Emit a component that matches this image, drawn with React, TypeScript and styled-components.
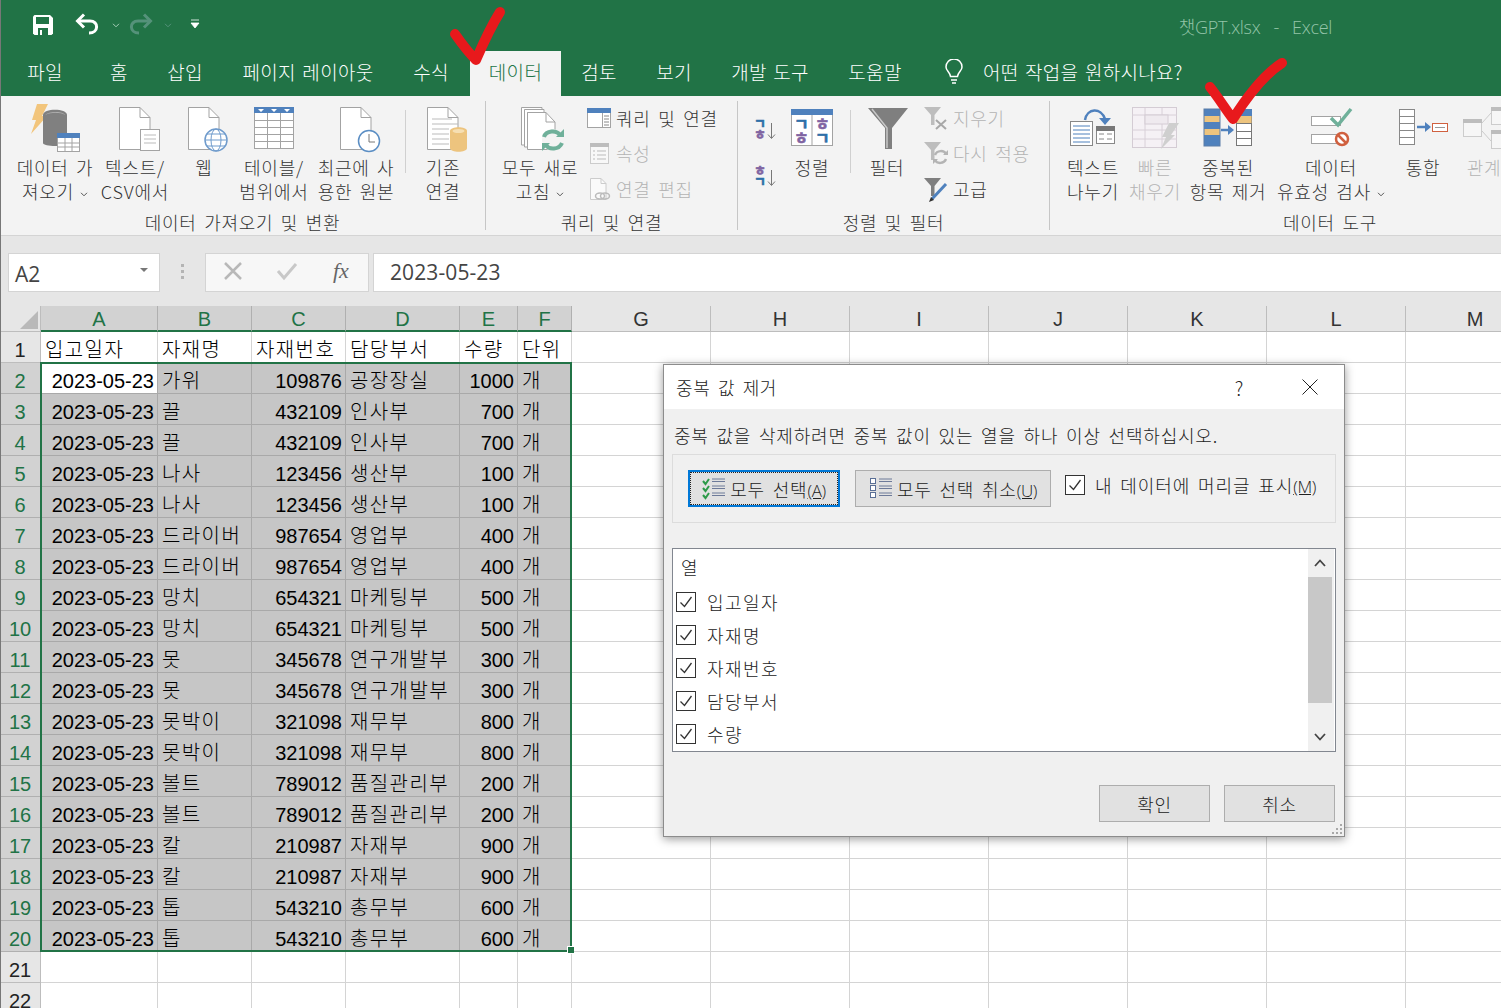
import React from 'react';
import styled, { createGlobalStyle } from 'styled-components';

const KO = `'Noto Sans CJK KR', 'Noto Sans', sans-serif`;
const LATIN = `'Liberation Sans', 'Noto Sans CJK KR', sans-serif`;
const GREEN = '#217346';

const GlobalStyle = createGlobalStyle`
  html, body { margin: 0; padding: 0; background: #fff; }
  body { font-family: ${KO}; color: #262626; }
`;

const Root = styled.div`
  position: relative;
  width: 1501px;
  height: 1008px;
  overflow: hidden;
  &::after {
    content: '';
    position: absolute;
    left: 0;
    top: 0;
    bottom: 0;
    width: 1px;
    background: #777;
  }
`;

/* ---------- title bar and tabs ---------- */
const TitleBar = styled.div`
  height: 51px;
  background: ${GREEN};
  display: flex;
  align-items: center;
  padding-left: 33px;
  position: relative;
`;
const Qat = styled.div<{ $ml?: number }>`
  display: flex;
  margin-left: ${(p) => p.$ml || 0}px;
`;
const FileName = styled.div`
  margin-left: auto;
  margin-right: 169px;
  font-size: 18px;
  color: #93c4a8;
  white-space: pre;
  font-family: 'Open Sans', ${KO};
  font-weight: 300;
  letter-spacing: -0.3px;
`;
const TabRow = styled.div`
  height: 45px;
  background: ${GREEN};
  display: flex;
  padding-left: 4px;
`;
const Tab = styled.div<{ $w: number; $active?: boolean }>`
  width: ${(p) => p.$w}px;
  margin-left: ${(p) => (p.$active ? 6 : 0)}px;
  background: ${(p) => (p.$active ? '#f3f3f3' : 'transparent')};
  color: ${(p) => (p.$active ? GREEN : '#fff')};
  font-size: 19px;
  letter-spacing: 0.3px;
  word-spacing: 2px;
  display: flex;
  align-items: center;
  justify-content: center;
  white-space: nowrap;
  font-weight: 300;
  padding-bottom: 4px;
  box-sizing: border-box;
`;
const TellMe = styled.div`
  margin-left: 23px;
  display: flex;
  align-items: center;
  gap: 19px;
  color: #fff;
  font-size: 19px;
  font-weight: 300;
  letter-spacing: 0.3px;
  word-spacing: 2px;
  padding-bottom: 4px;
`;

/* ---------- ribbon ---------- */
const Ribbon = styled.div`
  height: 140px;
  box-sizing: border-box;
  background: #f3f3f3;
  border-bottom: 1px solid #d4d4d4;
  display: flex;
  overflow: hidden;
  padding-top: 5px;
`;
const Group = styled.div<{ $w: number; $pl: number; $end?: boolean }>`
  flex: none;
  width: ${(p) => p.$w}px;
  height: 129px;
  box-sizing: border-box;
  border-right: ${(p) => (p.$end ? 'none' : '1px solid #c6c6c6')};
  display: flex;
  flex-direction: column;
  .items {
    flex: 1;
    display: flex;
    padding-left: ${(p) => p.$pl}px;
  }
`;
const GroupLabel = styled.div`
  height: 18px;
  line-height: 20px;
  text-align: center;
  font-size: 18px;
  font-weight: 300;
  letter-spacing: 0.7px;
  word-spacing: 3px;
  color: #333;
`;
const Item = styled.div<{ $w: number; $off?: boolean }>`
  flex: none;
  width: ${(p) => p.$w}px;
  display: flex;
  flex-direction: column;
  align-items: center;
  color: ${(p) => (p.$off ? '#b4b4b4' : '#333')};
  svg.big { display: block; flex: none; }
`;
const ItemText = styled.div`
  font-size: 18px;
  font-weight: 300;
  line-height: 24px;
  letter-spacing: 0.8px;
  word-spacing: 2.5px;
  text-align: center;
  white-space: nowrap;
`;
const Sep = styled.div<{ $ml: number; $mr: number }>`
  flex: none;
  width: 1px;
  height: 63px;
  margin: 9px ${(p) => p.$mr}px 0 ${(p) => p.$ml}px;
  background: #d0d0d0;
`;
const SmallList = styled.div<{ $ml?: number }>`
  flex: none;
  display: flex;
  flex-direction: column;
  margin-left: ${(p) => p.$ml || 0}px;
  margin-top: -1px;
`;
const SmallRow = styled.div<{ $off?: boolean }>`
  height: 35.5px;
  display: flex;
  align-items: center;
  gap: 5px;
  font-size: 18px;
  font-weight: 300;
  letter-spacing: 0.7px;
  word-spacing: 3px;
  white-space: nowrap;
  color: ${(p) => (p.$off ? '#b4b4b4' : '#333')};
`;
const SortCol = styled.div`
  flex: none;
  width: 35px;
  display: flex;
  flex-direction: column;
  align-items: center;
  gap: 23px;
  padding-top: 16px;
`;

const Chevron = ({ color = '#555' }: { color?: string }) => (
  <svg width="8" height="5" viewBox="0 0 8 5" style={{ marginLeft: 6, verticalAlign: 'middle' }}>
    <path d="M1 .8 4 3.8 7 .8" fill="none" stroke={color} strokeWidth="1" />
  </svg>
);

/* ---------- ribbon drawings, all in a 60x54 box ---------- */
const Big = ({ children, w = 60 }: { children: React.ReactNode; w?: number }) => (
  <svg className="big" width={w} height="54" viewBox={`0 0 ${w} 54`}>
    {children}
  </svg>
);
const G = '#a3a3a3';
const BLUE = '#4f81bd';
const JAMO_BLUE = '#2f6fa8';
const JAMO_PURPLE = '#8064a2';

const Doc = ({ x = 14, light = false }: { x?: number; light?: boolean }) => (
  <>
    <path
      d={`M${x + 0.5} 6.5H${x + 21}L${x + 31} 16.5V48.5H${x + 0.5}Z`}
      fill="#fff"
      stroke={light ? '#ccc' : G}
    />
    <path d={`M${x + 21} 6.5V16.5H${x + 31}`} fill="none" stroke={light ? '#ccc' : G} />
  </>
);

const IconGetData = () => (
  <Big>
    <path d="M12 3H23L17 15H22L6 33L11 19H7Z" fill="#f2c57c" />
    <path d="M18 14C18 7 42 7 42 14V42C42 46 18 46 18 42Z" fill="#808080" />
    <path d="M20 14C24 10 38 10 40 14C36 11 26 11 20 14Z" fill="#b5b5b5" />
    <rect x="32.5" y="32.5" width="22" height="18" fill="#fff" stroke={G} />
    <rect x="32" y="32" width="23" height="5" fill={BLUE} />
    <path d="M40 37V50M47 37V50M33 42H54M33 46H54" stroke={G} />
  </Big>
);
const IconCsv = () => (
  <Big>
    <Doc />
    <rect x="35.5" y="28.5" width="19" height="21" fill="#fff" stroke={G} />
    <path d="M39 34H51M39 38H51M39 42H51" stroke="#bbb" />
  </Big>
);
const IconWeb = () => (
  <Big>
    <Doc />
    <circle cx="42" cy="39" r="11" fill="#fff" stroke="#6f9bcc" strokeWidth="1.5" />
    <ellipse cx="42" cy="39" rx="5" ry="11" fill="none" stroke="#6f9bcc" />
    <path d="M31 39H53M33 33H51M33 45H51" stroke="#6f9bcc" />
  </Big>
);
const IconTable = () => (
  <Big>
    <rect x="10.5" y="6.5" width="39" height="41" fill="#fff" stroke={G} />
    <rect x="10" y="6" width="40" height="6" fill={BLUE} />
    <path d="M14 8H20L17 11ZM27 8H33L30 11ZM40 8H46L43 11Z" fill="#fff" />
    <path d="M23.5 12V48M36.5 12V48M11 19.5H49M11 26.5H49M11 33.5H49M11 40.5H49" stroke={G} />
  </Big>
);
const IconRecent = () => (
  <Big>
    <Doc />
    <circle cx="43" cy="40" r="10.5" fill="#fff" stroke="#5b8ec4" strokeWidth="1.5" />
    <path d="M43 33V41H49" fill="none" stroke="#777" />
  </Big>
);
const IconExisting = () => (
  <Big>
    <Doc />
    <path d="M19 18H39M19 23H45M19 28H36M19 33H36M19 38H36M19 43H36" stroke="#bbb" />
    <path d="M37 30C37 25 54 25 54 30V47C54 52 37 52 37 47Z" fill="#edc47e" />
    <ellipse cx="45.5" cy="30" rx="6" ry="2" fill="#f6dfb3" />
  </Big>
);
const IconRefresh = () => (
  <Big>
    <path d="M11.5 6.5H32V9H14.5V44H11.5Z" fill="#fff" stroke={G} />
    <path d="M14.5 8.5H34V11.5H17.5V46H14.5Z" fill="#fff" stroke={G} />
    <path d="M17.5 11.5H36L45 21V48.5H17.5Z" fill="#fff" stroke={G} />
    <path d="M36 11.5V21H45" fill="none" stroke={G} />
    <circle cx="43" cy="39" r="11" fill="#f3f3f3" />
    <path d="M34 36C36 29 47 29 50 34M52 42C49 49 39 49 36 44" fill="none" stroke="#6fb09a" strokeWidth="4" />
    <path d="M46 36H54V28ZM40 42H32V50Z" fill="#6fb09a" />
  </Big>
);
const Jamo = styled.text<{ $blue: boolean }>`
  font-family: ${KO};
  font-weight: 700;
  fill: ${(p) => (p.$blue ? JAMO_BLUE : JAMO_PURPLE)};
  stroke: ${(p) => (p.$blue ? JAMO_BLUE : JAMO_PURPLE)};
  stroke-width: 0.6px;
`;
const SortGlyph = ({ top, bottom }: { top: string; bottom: string }) => (
  <svg width="24" height="24" viewBox="0 0 24 24" style={{ overflow: 'visible' }}>
    <Jamo x="0" y="11" fontSize="13" $blue={top === 'ㄱ'}>{top}</Jamo>
    <Jamo x="0" y="22" fontSize="13" $blue={bottom === 'ㄱ'}>{bottom}</Jamo>
    <path d="M17.5 6V21M14 17.5 17.5 21.5 21 17.5" fill="none" stroke="#777" />
  </svg>
);
const IconSort = () => (
  <Big w={58}>
    <rect x="8.5" y="8.5" width="41" height="36" fill="#fff" stroke={G} />
    <rect x="8" y="8" width="42" height="6" fill={BLUE} />
    <path d="M29 14V45" stroke={G} />
    <Jamo x="11" y="29" fontSize="16" $blue>ㄱ</Jamo>
    <Jamo x="11" y="43" fontSize="16" $blue={false}>ㅎ</Jamo>
    <Jamo x="32" y="29" fontSize="16" $blue={false}>ㅎ</Jamo>
    <Jamo x="32" y="43" fontSize="16" $blue>ㄱ</Jamo>
  </Big>
);
const IconFunnel = () => (
  <Big w={72}>
    <path d="M17 7H57L41 27V48H34V27Z" fill="#7f7f7f" />
    <path d="M21 8 36 27V47" fill="none" stroke="#c8c8c8" strokeWidth="1.5" />
  </Big>
);
const SmallFunnel = ({ children, c = '#bdbdbd' }: { children?: React.ReactNode; c?: string }) => (
  <svg width="25" height="26" viewBox="0 0 25 26">
    <path d="M1 2H18L11.5 10V20H8V10Z" fill={c} />
    {children}
  </svg>
);
const IconQuery = () => (
  <svg width="24" height="22" viewBox="0 0 24 22">
    <rect x=".5" y="1.5" width="23" height="19" fill="#fff" stroke={G} />
    <rect x="0" y="1" width="24" height="5" fill={BLUE} />
    <path d="M17 9H22M17 12H22M17 15H22M17 18H22" stroke="#888" />
    <path d="M15.5 6V20" stroke={G} />
  </svg>
);
const IconProps = () => (
  <svg width="24" height="24" viewBox="0 0 24 24">
    <rect x="3.5" y="2.5" width="18" height="20" fill="#f8f8f8" stroke="#ccc" />
    <rect x="3" y="2" width="19" height="4" fill="#bdbdbd" />
    <path d="M6 10H8M10 10H19M6 14H8M10 14H19M6 18H8M10 18H19" stroke="#bbb" />
  </svg>
);
const IconLinks = () => (
  <svg width="24" height="24" viewBox="0 0 24 24">
    <path d="M3.5 1.5H14L19 6.5V22.5H3.5Z" fill="#fafafa" stroke="#ccc" />
    <path d="M14 1.5V6.5H19" fill="none" stroke="#ccc" />
    <ellipse cx="13" cy="19" rx="4.5" ry="3" fill="none" stroke="#bbb" strokeWidth="1.5" />
    <ellipse cx="18" cy="19" rx="4.5" ry="3" fill="none" stroke="#bbb" strokeWidth="1.5" />
  </svg>
);
const IconSplit = () => (
  <Big>
    <rect x="7.5" y="20.5" width="22" height="24" fill="#fff" stroke="#888" />
    <path d="M10 25H27M10 29H27M10 33H27M10 37H27M10 41H27" stroke={BLUE} />
    <rect x="33.5" y="25.5" width="18" height="17" fill="#fff" stroke="#888" />
    <rect x="33" y="25" width="19" height="5" fill="#777" />
    <path d="M36 33H41M44 33H49M36 38H41M44 38H49" stroke="#888" />
    <path d="M22 19C24 7 38 6 42 18" fill="none" stroke={BLUE} strokeWidth="2.5" />
    <path d="M36 17H48L42 24Z" fill={BLUE} />
  </Big>
);
const IconFlash = () => (
  <Big>
    <rect x="7.5" y="6.5" width="44" height="40" fill="#f5f1f5" stroke="#d4ccd4" />
    <path d="M7 14H52M7 29H52M7 38H52M20 7V46M37 7V46" stroke="#d8d0d8" />
    <rect x="20" y="14" width="23" height="9" fill="#efeaef" stroke="#d4ccd4" />
    <path d="M44 22H54L46 34H50L36 48L41 36H37Z" fill="#cfcfcf" />
  </Big>
);
const IconDup = () => (
  <Big>
    <rect x="6" y="8" width="16" height="37" fill={BLUE} stroke="#5a7da8" />
    <rect x="6.5" y="15" width="15" height="6" fill="#edc47e" />
    <rect x="6.5" y="28" width="15" height="6" fill="#edc47e" />
    <path d="M23 29H33" stroke={BLUE} strokeWidth="2.5" />
    <path d="M30 24 36 29 30 34Z" fill={BLUE} />
    <rect x="38.5" y="8.5" width="15" height="36" fill="#fff" stroke="#777" />
    <rect x="38" y="8" width="16" height="7" fill={BLUE} />
    <rect x="38.5" y="15" width="15" height="7" fill="#edc47e" />
    <path d="M38 22.5H54M38 30.5H54M38 37.5H54" stroke="#777" />
  </Big>
);
const IconValid = () => (
  <Big>
    <rect x="10.5" y="15.5" width="29" height="9" fill="#fff" stroke={G} />
    <rect x="10.5" y="33.5" width="29" height="9" fill="#fff" stroke={G} />
    <path d="M30 17 37 24 50 8" fill="none" stroke="#6fb09a" strokeWidth="3.5" />
    <circle cx="41" cy="38" r="6" fill="#fff" stroke="#d0603f" strokeWidth="2.5" />
    <path d="M37 34 45 42" stroke="#d0603f" strokeWidth="2.5" />
  </Big>
);
const IconMerge = () => (
  <Big>
    <rect x="6.5" y="8.5" width="15" height="35" fill="#fff" stroke="#888" />
    <path d="M6 15.5H22M6 22.5H22M6 29.5H22M6 36.5H22" stroke="#888" />
    <path d="M24 26H34" stroke={BLUE} strokeWidth="2.5" />
    <path d="M32 21 38 26 32 31Z" fill={BLUE} />
    <rect x="39.5" y="22.5" width="15" height="8" fill="#fff" stroke="#d0603f" />
    <path d="M42 26.5H52" stroke="#999" />
  </Big>
);
const IconRelation = () => (
  <Big>
    <rect x="9.5" y="18.5" width="18" height="17" fill="#f6f6f6" stroke="#ccc" />
    <rect x="9" y="18" width="19" height="4" fill="#bdbdbd" />
    <path d="M28 22 37 12M28 30 37 40" stroke="#ccc" />
    <rect x="37.5" y="6.5" width="20" height="17" fill="#f6f6f6" stroke="#ccc" />
    <rect x="37" y="6" width="21" height="4" fill="#bdbdbd" />
    <rect x="37.5" y="29.5" width="20" height="18" fill="#f6f6f6" stroke="#ccc" />
    <rect x="37" y="29" width="21" height="4" fill="#bdbdbd" />
  </Big>
);

/* ---------- formula bar ---------- */
const FormulaBar = styled.div`
  height: 70px;
  background: #e6e6e6;
  display: flex;
  padding: 17px 0 14px 8px;
  box-sizing: border-box;
  align-items: stretch;
`;
const NameBox = styled.div`
  width: 152px;
  box-sizing: border-box;
  background: #fff;
  border: 1px solid #d4d4d4;
  display: flex;
  align-items: center;
  justify-content: space-between;
  padding: 2px 11px 0 6px;
  font-family: 'Open Sans', sans-serif;
  font-size: 21px;
  color: #444;
  &::after {
    content: '';
    border: 4px solid transparent;
    border-top: 4px solid #777;
    border-bottom: 0;
    margin-bottom: 8px;
  }
`;
const Grip = styled.div`
  width: 45px;
  display: flex;
  flex-direction: column;
  align-items: center;
  justify-content: center;
  gap: 3px;
  padding-bottom: 3px;
  i {
    width: 3px;
    height: 3px;
    background: #b4b4b4;
  }
`;
const FxBox = styled.div`
  width: 164px;
  box-sizing: border-box;
  background: #f7f7f7;
  border: 1px solid #d4d4d4;
  display: flex;
  align-items: center;
  padding: 0 0 4px 17px;
  margin-right: 4px;
  gap: 33px;
  span {
    font-family: 'Liberation Serif', serif;
    font-style: italic;
    font-size: 22px;
    color: #666;
    margin-left: 2px;
  }
`;
const FormulaInput = styled.div`
  flex: 1;
  background: #fff;
  border: 1px solid #d4d4d4;
  border-right: 0;
  padding: 0 0 1px 16px;
  display: flex;
  align-items: center;
  font-family: 'Open Sans', sans-serif;
  font-size: 21px;
  letter-spacing: 0.1px;
  color: #444;
`;

/* ---------- sheet ---------- */
const Sheet = styled.div`
  position: relative;
  display: grid;
  grid-template-columns: 41px 117px 94px 94px 114px 58px 54px repeat(7, 139px);
  grid-auto-rows: 31px;
  grid-template-rows: 26px;
  background: #fff;
`;
const Corner = styled.div`
  background: #e6e6e6;
  border-right: 1px solid #bdbdbd;
  border-bottom: 1px solid #bdbdbd;
  box-sizing: border-box;
  position: relative;
  &::after {
    content: '';
    position: absolute;
    left: 20px;
    top: 5px;
    width: 18px;
    height: 18px;
    background: #b9b9b9;
    clip-path: polygon(100% 0, 100% 100%, 0 100%);
  }
`;
const ColHead = styled.div<{ $on: boolean }>`
  box-sizing: border-box;
  background: ${(p) => (p.$on ? '#d2d2d2' : '#e6e6e6')};
  border-right: 1px solid ${(p) => (p.$on ? '#b0b0b0' : '#bdbdbd')};
  border-bottom: ${(p) => (p.$on ? `2px solid ${GREEN}` : '1px solid #bdbdbd')};
  color: ${(p) => (p.$on ? GREEN : '#333')};
  font-family: ${LATIN};
  font-size: 20px;
  line-height: 26px;
  text-align: center;
`;
const RowHead = styled.div<{ $on: boolean }>`
  box-sizing: border-box;
  background: ${(p) => (p.$on ? '#d2d2d2' : '#e6e6e6')};
  border-right: 1px solid #bdbdbd;
  border-bottom: 1px solid ${(p) => (p.$on ? '#b0b0b0' : '#bdbdbd')};
  color: ${(p) => (p.$on ? GREEN : '#222')};
  font-family: ${LATIN};
  font-size: 20px;
  line-height: 36px;
  height: 31px;
  overflow: hidden;
  text-align: center;
`;
const Cell = styled.div<{ $sel?: boolean; $active?: boolean; $num?: boolean }>`
  box-sizing: border-box;
  background: ${(p) => (p.$active ? '#fff' : p.$sel ? '#c6c6c6' : '#fff')};
  border-right: 1px solid ${(p) => (p.$sel ? '#a9a9a9' : '#d4d4d4')};
  border-bottom: 1px solid ${(p) => (p.$sel ? '#a9a9a9' : '#d4d4d4')};
  color: #000;
  height: 31px;
  overflow: visible;
  white-space: nowrap;
  font-family: ${(p) => (p.$num ? LATIN : KO)};
  font-size: 20px;
  font-weight: ${(p) => (p.$num ? 400 : 300)};
  letter-spacing: ${(p) => (p.$num ? 0 : 1.4)}px;
  line-height: ${(p) => (p.$num ? 36 : 34)}px;
  text-align: ${(p) => (p.$num ? 'right' : 'left')};
  padding: 0 3px 0 4px;
`;
const Selection = styled.div`
  position: absolute;
  left: 40px;
  top: 56px;
  width: 532px;
  height: 590px;
  box-sizing: border-box;
  border: 2px solid ${GREEN};
  pointer-events: none;
  &::after {
    content: '';
    position: absolute;
    right: -4px;
    bottom: -4px;
    width: 6px;
    height: 6px;
    background: ${GREEN};
    border: 1px solid #fff;
    border-right: 0;
  }
`;

/* ---------- dialog ---------- */
const Dialog = styled.div`
  position: absolute;
  left: 663px;
  top: 364px;
  width: 682px;
  height: 473px;
  box-sizing: border-box;
  background: #f0f0f0;
  border: 1px solid #8c8c8c;
  box-shadow: 0 2px 9px rgba(0, 0, 0, 0.4);
  font-weight: 300;
  color: #222;
`;
const DialogTitle = styled.div`
  height: 44px;
  background: #fff;
  display: flex;
  align-items: center;
  padding-left: 12px;
  font-size: 18px;
  letter-spacing: 0.6px;
  word-spacing: 3px;
  span.help {
    margin-left: auto;
    font-size: 19px;
    margin-right: 58px;
  }
  svg {
    margin-right: 26px;
  }
`;
const Prompt = styled.div`
  height: 45px;
  line-height: 52px;
  padding-left: 10px;
  font-size: 18px;
  letter-spacing: 0.8px;
  word-spacing: 3px;
  white-space: nowrap;
`;
const OptionBox = styled.div`
  margin: 0 8px;
  height: 69px;
  box-sizing: border-box;
  border: 1px solid #dcdcdc;
  display: flex;
  align-items: center;
  padding-left: 15px;
`;
const PushButton = styled.div<{ $w: number; $focus?: boolean; $ml?: number }>`
  flex: none;
  width: ${(p) => p.$w}px;
  height: 37px;
  margin-left: ${(p) => p.$ml || 0}px;
  box-sizing: border-box;
  background: #e1e1e1;
  border: ${(p) => (p.$focus ? '2px solid #0078d7' : '1px solid #adadad')};
  outline: ${(p) => (p.$focus ? '1px dotted #222' : 'none')};
  outline-offset: ${(p) => (p.$focus ? '-3px' : '0')};
  display: flex;
  align-items: center;
  justify-content: center;
  gap: 4px;
  font-size: 18px;
  letter-spacing: 0.8px;
  word-spacing: 3px;
  white-space: nowrap;
`;
const Mnemonic = styled.u`
  font-family: 'Open Sans', sans-serif;
  font-size: 17px;
  letter-spacing: -0.4px;
`;
const CheckLabel = styled.div`
  margin-left: 14px;
  margin-top: -7px;
  display: flex;
  align-items: center;
  gap: 10px;
  font-size: 18px;
  letter-spacing: 0.9px;
  word-spacing: 3px;
  white-space: nowrap;
`;
const Box = styled.span`
  flex: none;
  width: 20px;
  height: 20px;
  box-sizing: border-box;
  border: 1px solid #333;
  background: #fff;
  display: inline-flex;
  align-items: center;
  justify-content: center;
`;
const ListBox = styled.div`
  margin: 25px 8px 0;
  height: 204px;
  box-sizing: border-box;
  border: 1px solid #828790;
  background: #fff;
  display: flex;
`;
const ListBody = styled.div`
  flex: 1;
  padding-left: 3px;
  font-size: 18px;
  letter-spacing: 1.4px;
`;
const ListHead = styled.div`
  height: 36px;
  line-height: 37px;
  padding-left: 5px;
`;
const ListRow = styled.div`
  height: 33px;
  display: flex;
  align-items: center;
  gap: 11px;
`;
const ScrollBar = styled.div`
  flex: none;
  width: 26px;
  margin: 0 1px 0 0;
  background: #f0f0f0;
  display: flex;
  flex-direction: column;
  align-items: center;
  justify-content: space-between;
  position: relative;
`;
const ScrollThumb = styled.div`
  position: absolute;
  left: 0;
  top: 28px;
  width: 24px;
  height: 126px;
  background: #c8c8c8;
`;
const ScrollArrow = styled.div`
  height: 28px;
  display: flex;
  align-items: center;
  margin-right: 3px;
`;
const DialogFoot = styled.div`
  display: flex;
  justify-content: flex-end;
  gap: 14px;
  padding: 33px 9px 0 0;
`;
const ResizeGrip = styled.svg`
  position: absolute;
  right: 1px;
  bottom: 1px;
`;

const CheckMark = ({ s = 14 }: { s?: number }) => (
  <svg width={s} height={s} viewBox="0 0 14 14">
    <path d="M1.5 7.5 5.5 11.5 12.5 2" fill="none" stroke="#333" strokeWidth="1.3" />
  </svg>
);

const ListIcon = ({ checked }: { checked?: boolean }) => (
  <svg width="24" height="24" viewBox="0 0 24 24">
    {[3, 10, 17].map((y) => (
      <g key={y}>
        {checked ? (
          <path d={`M1 ${y + 1} 3.5 ${y + 4} 7 ${y - 1}`} fill="none" stroke="#2c9a48" strokeWidth="2" />
        ) : (
          <rect x="1.5" y={y - 1.5} width="5" height="5" fill="#fff" stroke="#5a6f96" />
        )}
        <path d={`M10 ${y - 1}H23M10 ${y + 1.5}H23`} stroke="#6d7a99" />
      </g>
    ))}
  </svg>
);

/* ---------- red pen marks lying over the ribbon ---------- */
const PenMark = styled.svg`
  position: absolute;
  left: 0;
  top: 0;
  pointer-events: none;
`;

const COLS = ['A', 'B', 'C', 'D', 'E', 'F', 'G', 'H', 'I', 'J', 'K', 'L', 'M'];

const ROWS: [string, string, string, string, string][] = [
  ['가위', '109876', '공장장실', '1000', '개'],
  ['끌', '432109', '인사부', '700', '개'],
  ['끌', '432109', '인사부', '700', '개'],
  ['나사', '123456', '생산부', '100', '개'],
  ['나사', '123456', '생산부', '100', '개'],
  ['드라이버', '987654', '영업부', '400', '개'],
  ['드라이버', '987654', '영업부', '400', '개'],
  ['망치', '654321', '마케팅부', '500', '개'],
  ['망치', '654321', '마케팅부', '500', '개'],
  ['못', '345678', '연구개발부', '300', '개'],
  ['못', '345678', '연구개발부', '300', '개'],
  ['못박이', '321098', '재무부', '800', '개'],
  ['못박이', '321098', '재무부', '800', '개'],
  ['볼트', '789012', '품질관리부', '200', '개'],
  ['볼트', '789012', '품질관리부', '200', '개'],
  ['칼', '210987', '자재부', '900', '개'],
  ['칼', '210987', '자재부', '900', '개'],
  ['톱', '543210', '총무부', '600', '개'],
  ['톱', '543210', '총무부', '600', '개'],
];

const HEADERS = ['입고일자', '자재명', '자재번호', '담당부서', '수량', '단위'];
const FIELDS = ['입고일자', '자재명', '자재번호', '담당부서', '수량'];

const EmptyCells = ({ n }: { n: number }) => (
  <>
    {Array.from({ length: n }).map((_, i) => (
      <Cell key={i} />
    ))}
  </>
);

export default function App() {
  return (
    <Root>
      <GlobalStyle />
      <TitleBar>
        <svg width="20" height="20" viewBox="0 0 20 20" style={{ marginTop: -2 }}>
          <path d="M0 1.5 1.5 0H17L20 3V18.5L18.5 20H1.5L0 18.5Z" fill="#fff" />
          <rect x="3" y="2" width="13" height="7" fill={GREEN} />
          <rect x="5" y="13" width="10" height="7" fill={GREEN} />
          <rect x="7" y="15" width="2" height="5" fill="#fff" />
        </svg>
        <Qat $ml={22}>
          <svg width="24" height="24" viewBox="0 0 24 24" style={{ marginTop: -3 }}>
            <path d="M3 9H15C24 9 24 21 14 21" fill="none" stroke="#fff" strokeWidth="3" />
            <path d="M9 2.5 2.5 9 9 15.5" fill="none" stroke="#fff" strokeWidth="3" />
          </svg>
        </Qat>
        <Qat $ml={7}>
          <Chevron color="#a6cdb7" />
        </Qat>
        <Qat $ml={9}>
          <svg width="24" height="24" viewBox="0 0 24 24" style={{ marginTop: -3 }}>
            <path d="M21 9H9C0 9 0 21 10 21" fill="none" stroke="#55927a" strokeWidth="3" />
            <path d="M15 2.5 21.5 9 15 15.5" fill="none" stroke="#55927a" strokeWidth="3" />
          </svg>
        </Qat>
        <Qat $ml={5}>
          <Chevron color="#55927a" />
        </Qat>
        <Qat $ml={18}>
          <svg width="10" height="10" viewBox="0 0 10 10" style={{ marginTop: -3 }}>
            <path d="M1 1H9M1 4H9L5 9Z" fill="#fff" stroke="#fff" strokeWidth=".8" />
          </svg>
        </Qat>
        <FileName>챗GPT.xlsx   -   Excel</FileName>
      </TitleBar>
      <TabRow>
        <Tab $w={82}>파일</Tab>
        <Tab $w={66}>홈</Tab>
        <Tab $w={66}>삽입</Tab>
        <Tab $w={180}>페이지 레이아웃</Tab>
        <Tab $w={66}>수식</Tab>
        <Tab $w={91} $active>데이터</Tab>
        <Tab $w={76}>검토</Tab>
        <Tab $w={74}>보기</Tab>
        <Tab $w={118}>개발 도구</Tab>
        <Tab $w={92}>도움말</Tab>
        <TellMe>
          <svg width="20" height="26" viewBox="0 0 20 26">
            <path d="M6.5 17.5C6 13 2 12 2 8A8 8 0 0 1 18 8C18 12 14 13 13.5 17.5Z" fill="none" stroke="#fff" strokeWidth="1.5" />
            <path d="M7 21H13M8 24H12" stroke="#fff" strokeWidth="1.5" />
          </svg>
          어떤 작업을 원하시나요?
        </TellMe>
      </TabRow>
      <Ribbon>
        <Group $w={486} $pl={15}>
          <div className="items">
            <Item $w={80}>
              <IconGetData />
              <ItemText>데이터 가<br />져오기<Chevron /></ItemText>
            </Item>
            <Item $w={80}>
              <IconCsv />
              <ItemText>텍스트/<br />CSV에서</ItemText>
            </Item>
            <Item $w={58}>
              <IconWeb />
              <ItemText>웹</ItemText>
            </Item>
            <Item $w={82}>
              <IconTable />
              <ItemText>테이블/<br />범위에서</ItemText>
            </Item>
            <Item $w={82}>
              <IconRecent />
              <ItemText>최근에 사<br />용한 원본</ItemText>
            </Item>
            <Sep $ml={8} $mr={5} />
            <Item $w={64}>
              <IconExisting />
              <ItemText>기존<br />연결</ItemText>
            </Item>
          </div>
          <GroupLabel>데이터 가져오기 및 변환</GroupLabel>
        </Group>
        <Group $w={252} $pl={10}>
          <div className="items">
            <Item $w={88}>
              <IconRefresh />
              <ItemText>모두 새로<br />고침<Chevron /></ItemText>
            </Item>
            <SmallList $ml={3}>
              <SmallRow><IconQuery />쿼리 및 연결</SmallRow>
              <SmallRow $off><IconProps />속성</SmallRow>
              <SmallRow $off><IconLinks />연결 편집</SmallRow>
            </SmallList>
          </div>
          <GroupLabel>쿼리 및 연결</GroupLabel>
        </Group>
        <Group $w={312} $pl={10}>
          <div className="items">
            <SortCol>
              <SortGlyph top="ㄱ" bottom="ㅎ" />
              <SortGlyph top="ㅎ" bottom="ㄱ" />
            </SortCol>
            <Item $w={58}>
              <IconSort />
              <ItemText>정렬</ItemText>
            </Item>
            <Sep $ml={9} $mr={0} />
            <Item $w={72}>
              <IconFunnel />
              <ItemText>필터</ItemText>
            </Item>
            <SmallList>
              <SmallRow $off>
                <SmallFunnel>
                  <path d="M13 15 23 24M23 15 13 24" stroke="#a8a8a8" strokeWidth="2" />
                </SmallFunnel>
                지우기
              </SmallRow>
              <SmallRow $off>
                <SmallFunnel>
                  <path d="M12 15C14 10 21 10 23 14M23 19C21 24 14 24 12 20" fill="none" stroke="#b4b4b4" strokeWidth="2.5" />
                  <path d="M20 15H25V10ZM15 19H10V24Z" fill="#b4b4b4" />
                </SmallFunnel>
                다시 적용
              </SmallRow>
              <SmallRow>
                <SmallFunnel c="#7f7f7f">
                  <path d="M9 23 23 8" stroke={BLUE} strokeWidth="3" />
                  <path d="M6 26 8 21 11 24Z" fill="#333" />
                </SmallFunnel>
                고급
              </SmallRow>
            </SmallList>
          </div>
          <GroupLabel>정렬 및 필터</GroupLabel>
        </Group>
        <Group $w={560} $pl={12} $end>
          <div className="items">
            <Item $w={62}>
              <IconSplit />
              <ItemText>텍스트<br />나누기</ItemText>
            </Item>
            <Item $w={62} $off>
              <IconFlash />
              <ItemText>빠른<br />채우기</ItemText>
            </Item>
            <Item $w={84}>
              <IconDup />
              <ItemText>중복된<br />항목 제거</ItemText>
            </Item>
            <Item $w={122}>
              <IconValid />
              <ItemText>데이터<br />유효성 검사<Chevron /></ItemText>
            </Item>
            <Item $w={62}>
              <IconMerge />
              <ItemText>통합</ItemText>
            </Item>
            <Item $w={60} $off>
              <IconRelation />
              <ItemText>관계</ItemText>
            </Item>
          </div>
          <GroupLabel>데이터 도구</GroupLabel>
        </Group>
      </Ribbon>
      <FormulaBar>
        <NameBox>A2</NameBox>
        <Grip><i /><i /><i /></Grip>
        <FxBox>
          <svg width="20" height="20" viewBox="0 0 20 20">
            <path d="M2 2 18 18M18 2 2 18" stroke="#b8b8b8" strokeWidth="2.5" />
          </svg>
          <svg width="22" height="20" viewBox="0 0 22 20">
            <path d="M2 10 8 17 20 3" fill="none" stroke="#c8c8c8" strokeWidth="3" />
          </svg>
          <span>fx</span>
        </FxBox>
        <FormulaInput>2023-05-23</FormulaInput>
      </FormulaBar>
      <Sheet>
        <Corner />
        {COLS.map((c, i) => (
          <ColHead key={c} $on={i < 6}>{c}</ColHead>
        ))}
        <RowHead $on={false}>1</RowHead>
        {HEADERS.map((h) => (
          <Cell key={h}>{h}</Cell>
        ))}
        <EmptyCells n={7} />
        {ROWS.map((r, i) => (
          <React.Fragment key={i}>
            <RowHead $on>{i + 2}</RowHead>
            <Cell $sel $active={i === 0} $num>2023-05-23</Cell>
            <Cell $sel>{r[0]}</Cell>
            <Cell $sel $num>{r[1]}</Cell>
            <Cell $sel>{r[2]}</Cell>
            <Cell $sel $num>{r[3]}</Cell>
            <Cell $sel>{r[4]}</Cell>
            <EmptyCells n={7} />
          </React.Fragment>
        ))}
        <RowHead $on={false}>21</RowHead>
        <EmptyCells n={13} />
        <RowHead $on={false}>22</RowHead>
        <EmptyCells n={13} />
        <Selection />
      </Sheet>
      <Dialog>
        <DialogTitle>
          중복 값 제거
          <span className="help">?</span>
          <svg width="16" height="16" viewBox="0 0 16 16">
            <path d="M.5 .5 15.5 15.5M15.5 .5 .5 15.5" stroke="#222" strokeWidth="1" />
          </svg>
        </DialogTitle>
        <Prompt>중복 값을 삭제하려면 중복 값이 있는 열을 하나 이상 선택하십시오.</Prompt>
        <OptionBox>
          <PushButton $w={152} $focus>
            <ListIcon checked />
            <span>모두 선택<Mnemonic>(A)</Mnemonic></span>
          </PushButton>
          <PushButton $w={196} $ml={15}>
            <ListIcon />
            <span>모두 선택 취소<Mnemonic>(U)</Mnemonic></span>
          </PushButton>
          <CheckLabel>
            <Box><CheckMark /></Box>
            <span>내 데이터에 머리글 표시<Mnemonic>(M)</Mnemonic></span>
          </CheckLabel>
        </OptionBox>
        <ListBox>
          <ListBody>
            <ListHead>열</ListHead>
            {FIELDS.map((f) => (
              <ListRow key={f}>
                <Box><CheckMark /></Box>
                {f}
              </ListRow>
            ))}
          </ListBody>
          <ScrollBar>
            <ScrollThumb />
            <ScrollArrow>
              <svg width="12" height="8" viewBox="0 0 12 8">
                <path d="M1 7 6 1.5 11 7" fill="none" stroke="#444" strokeWidth="1.8" />
              </svg>
            </ScrollArrow>
            <ScrollArrow>
              <svg width="12" height="8" viewBox="0 0 12 8">
                <path d="M1 1 6 6.5 11 1" fill="none" stroke="#444" strokeWidth="1.8" />
              </svg>
            </ScrollArrow>
          </ScrollBar>
        </ListBox>
        <DialogFoot>
          <PushButton $w={111}>확인</PushButton>
          <PushButton $w={111}>취소</PushButton>
        </DialogFoot>
        <ResizeGrip width="12" height="12" viewBox="0 0 12 12">
          <path d="M9 1h2v2H9zM5 5h2v2H5zM9 5h2v2H9zM1 9h2v2H1zM5 9h2v2H5zM9 9h2v2H9z" fill="#a8a8a8" />
        </ResizeGrip>
      </Dialog>
      <PenMark width="1501" height="1008" viewBox="0 0 1501 1008">
        <path d="M455 34C462 44 470 54 476 60C482 46 490 28 500 12" fill="none" stroke="#e8191c" strokeWidth="10" strokeLinecap="round" strokeLinejoin="round" />
        <path d="M1210 87C1218 97 1226 110 1233 119C1245 100 1262 76 1282 63" fill="none" stroke="#e8191c" strokeWidth="10" strokeLinecap="round" strokeLinejoin="round" />
      </PenMark>
    </Root>
  );
}
